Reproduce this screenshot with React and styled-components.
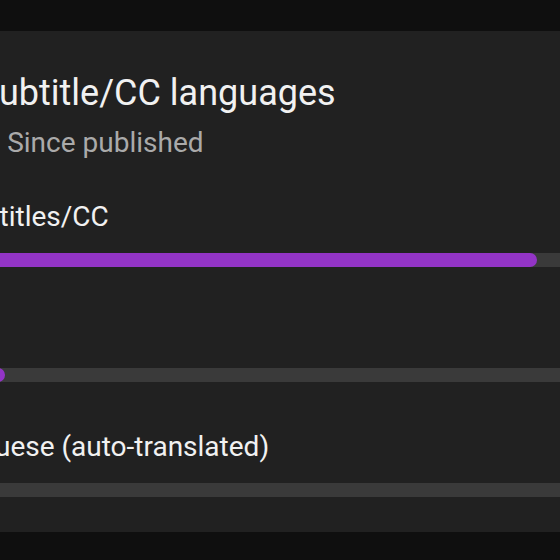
import React from 'react';
import styled, { createGlobalStyle } from 'styled-components';

const GlobalStyle = createGlobalStyle`
  html, body {
    margin: 0;
    padding: 0;
    background: #0f0f0f;
  }
  body {
    font-family: Roboto, "Noto Sans", Arial, sans-serif;
  }
`;

const Page = styled.div`
  width: 560px;
  height: 560px;
  overflow: hidden;
  padding-top: 31px;
  box-sizing: border-box;
  background: #0f0f0f;
`;

const Card = styled.section`
  width: 760px;
  height: 501px;
  margin-left: -113px;
  padding: 40px 0 0 24px;
  box-sizing: border-box;
  background: #212121;
  display: flex;
  flex-direction: column;
`;

const Title = styled.h2`
  margin: 0;
  font-size: 36px;
  line-height: 44px;
  font-weight: 400;
  color: #f1f1f1;
  white-space: nowrap;
`;

const Subtitle = styled.div`
  margin-top: 10px;
  font-size: 28px;
  line-height: 36px;
  color: #aaaaaa;
  white-space: nowrap;
`;

const List = styled.div`
  margin-top: 38px;
  display: flex;
  flex-direction: column;
  gap: 47px;
`;

const Row = styled.div`
  display: flex;
  flex-direction: column;
  gap: 18px;
`;

const Label = styled.div`
  font-size: 28px;
  line-height: 36px;
  color: #f1f1f1;
  white-space: nowrap;
`;

const Track = styled.div`
  width: 700px;
  height: 14px;
  background: #3a3a3a;
  display: flex;
`;

const Fill = styled.div`
  height: 100%;
  background: #9334c6;
  border-radius: 0 7px 7px 0;
`;

const rows = [
  { label: 'No subtitles/CC', share: 89.4 },
  { label: 'Hindi', share: 13.4 },
  { label: 'Portuguese (auto-translated)', share: 0 },
];

export default function App() {
  return (
    <>
      <GlobalStyle />
      <Page>
        <Card>
          <Title>Top subtitle/CC languages</Title>
          <Subtitle>Views · Since published</Subtitle>
          <List>
            {rows.map((row) => (
              <Row key={row.label}>
                <Label>{row.label}</Label>
                <Track>
                  <Fill style={{ width: `${row.share}%` }} />
                </Track>
              </Row>
            ))}
          </List>
        </Card>
      </Page>
    </>
  );
}
